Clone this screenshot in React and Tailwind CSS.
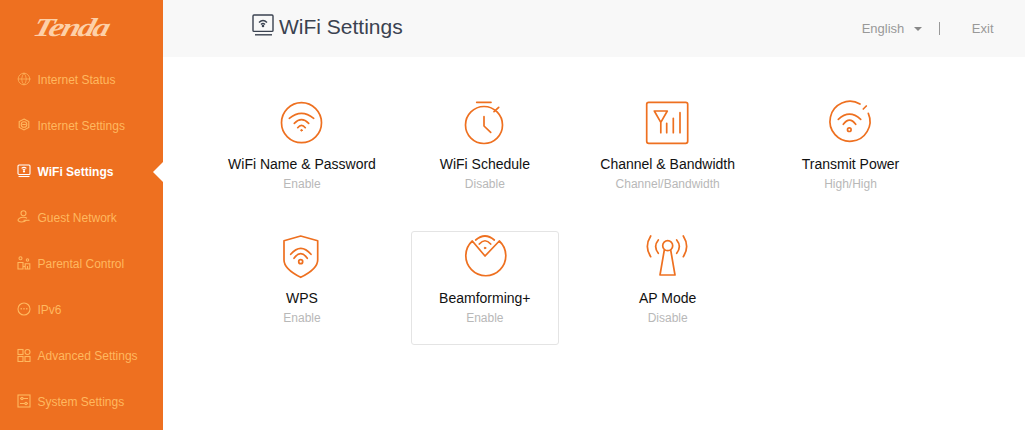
import { Globe } from "lucide-react";

const menuItems = [
    { label: "Internet Status", icon: "globe" },
    { label: "Internet Settings", icon: "internet" },
    { label: "WiFi Settings", icon: "wifi", active: true },
    { label: "Guest Network", icon: "guest" },
    { label: "Parental Control", icon: "parental" },
    { label: "IPv6", icon: "ipv6" },
    { label: "Advanced Settings", icon: "advanced" },
    { label: "System Settings", icon: "system" },
];

const tiles = [
    { name: "WiFi Name & Password", status: "Enable", icon: "wifiCircle" },
    { name: "WiFi Schedule", status: "Disable", icon: "schedule" },
    { name: "Channel & Bandwidth", status: "Channel/Bandwidth", icon: "channel" },
    { name: "Transmit Power", status: "High/High", icon: "power" },
    { name: "WPS", status: "Enable", icon: "wps" },
    { name: "Beamforming+", status: "Enable", icon: "beam", hovered: true },
    { name: "AP Mode", status: "Disable", icon: "ap" },
];

// Small sidebar icons, drawn on a 14px box
function MenuIcon({ name }) {
    const shapes = {
        globe: <Globe size={14} strokeWidth={1.2} />,
        internet: (
            <svg width="14" height="14" viewBox="0 0 14 14" fill="none" stroke="currentColor" strokeWidth="1.1">
                <path d="M7 1 11.800 3.500v6L7 12 2.200 9.500v-6z" />
                <circle cx="7" cy="6.500" r="2.800" />
                <path d="M5.200 6.500h3.600" />
            </svg>
        ),
        wifi: (
            <svg width="14" height="14" viewBox="0 0 14 14" fill="none" stroke="currentColor" strokeWidth="1.100">
                <rect x="1" y="1" width="12" height="9.500" rx="1" />
                <path d="M1.500 12.500h11" />
                <path d="M4.600 4.400c1.400-1.200 3.400-1.200 4.800 0M5.800 5.800c.7-.6 1.700-.6 2.400 0" />
                <circle cx="7" cy="7.400" r=".6" fill="currentColor" />
            </svg>
        ),
        guest: (
            <svg width="14" height="14" viewBox="0 0 14 14" fill="none" stroke="currentColor" strokeWidth="1.100">
                <circle cx="6.500" cy="3.200" r="2.500" />
                <path d="M10 8.200C8 6.800 3.500 6.800 1.500 9c-1.200 1.800.5 3 3 3 2.800 0 4-.8 4.800-1.800" />
                <path d="M6.500 10.300h6" />
            </svg>
        ),
        parental: (
            <svg width="14" height="14" viewBox="0 0 14 14" fill="none" stroke="currentColor" strokeWidth="1.100">
                <circle cx="3.500" cy="2.200" r="1.500" />
                <circle cx="10.500" cy="4" r="1.200" />
                <path d="M1 13V6.500h5V13zM8.200 13V7.800h4.600V13zM6 10.500h2.200M10.500 10v3" />
            </svg>
        ),
        ipv6: (
            <svg width="14" height="14" viewBox="0 0 14 14" fill="none" stroke="currentColor" strokeWidth="1.100">
                <circle cx="7" cy="7" r="6" />
                <path d="M3.600 6.800h1.200M6.400 6.800h1.200M9.200 6.800h1.200" strokeWidth="1.500" />
            </svg>
        ),
        advanced: (
            <svg width="14" height="14" viewBox="0 0 14 14" fill="none" stroke="currentColor" strokeWidth="1.100">
                <rect x="1" y="1.500" width="5" height="5" />
                <circle cx="10.500" cy="4" r="2.500" />
                <rect x="1" y="8.500" width="5" height="5" />
                <rect x="8" y="8.500" width="5" height="5" />
            </svg>
        ),
        system: (
            <svg width="14" height="14" viewBox="0 0 14 14" fill="none" stroke="currentColor" strokeWidth="1.100">
                <rect x="1" y="1" width="12" height="12" />
                <path d="M3 4.500h8M3 9.500h8" />
                <circle cx="5" cy="4.500" r="1.100" fill="#ee7020" />
                <circle cx="9" cy="9.500" r="1.100" fill="#ee7020" />
            </svg>
        ),
    };
    return shapes[name];
}

// Large orange tile icons, 46px box
function TileIcon({ name }) {
    const shapes = {
        wifiCircle: (
            <>
                <circle cx="23" cy="22.700" r="20" />
                <path d="M10.800 18.300Q23 8.500 35.200 18.300M15.800 23.300Q23 16 30.200 23.300M19.200 27.700Q23 23 26.800 27.700" />
                <circle cx="23" cy="30.300" r=".8" fill="#ee7020" strokeWidth="1" />
            </>
        ),
        schedule: (
            <>
                <path d="M15.200 2.300h14.300" />
                <path d="M32.500 11.700 37.200 7.300" />
                <circle cx="22.500" cy="25" r="18.500" />
                <path d="M22.500 16.700V26l6.700 6.300" />
            </>
        ),
        channel: (
            <>
                <rect x="2.200" y="2.300" width="41" height="41" rx="2" />
                <path d="M9.800 11h13l-6.500 11.300zM16.300 22.300v10.400M22.200 23.300v9.400M28.800 18.300v14.400M35.500 12.700v20" />
            </>
        ),
        power: (
            <>
                <path d="M33.500 4A20 20 0 1 0 41.800 13.300" />
                <path d="M36.800 9 39.800 6" />
                <path d="M11.800 19.300Q23 9 34.200 19.300M16.800 24.300Q23 16 29.200 24.300" />
                <circle cx="22.800" cy="29.700" r="1.800" />
            </>
        ),
        wps: (
            <>
                <path d="M22.200 2 39.200 6.700V26C39.200 33 31 39 22.200 43.300 13.500 39 5.500 33 5.500 26V6.700z" />
                <path d="M12.200 20.300Q22.300 8.500 32.500 20.300M15.500 24.300Q22.200 15 28.800 24.300" />
                <circle cx="22.200" cy="27.700" r="2" />
            </>
        ),
        beam: (
            <>
                <path d="M10.800 7 23.500 22 37.800 7A20 20 0 1 1 10.800 7z" />
                <path d="M14.200 6Q23.500-2 32.800 6M17.800 10Q23.500 3.500 29.200 10" />
                <circle cx="23.500" cy="14" r=".8" fill="#ee7020" strokeWidth="1" />
            </>
        ),
        ap: (
            <>
                <circle cx="23.200" cy="11.700" r="5" />
                <path d="M19.800 16 15.500 41h15L26.200 16" />
                <path d="M6.200 2Q-.5 12.500 6.200 22.700M38.800 2Q45.500 12.500 38.800 22.700M13.800 6Q8.500 12.500 13.800 19.300M32.200 6Q37.500 12.500 32.200 19.300" />
            </>
        ),
    };
    return (
        <svg width="46" height="46" viewBox="0.5 0 46 46" fill="none" stroke="#ee7020" strokeWidth="1.700" strokeLinecap="round" strokeLinejoin="round" className="overflow-visible">
            {shapes[name]}
        </svg>
    );
}

function Sidebar() {
    return (
        <aside className="w-[163px] shrink-0 bg-[#ee7020] h-[430px] overflow-hidden">
            <div className="h-[57px] pl-[34px] pt-[13px]">
                <span className="block origin-left -skew-x-12 scale-x-[1.28] text-[26px] leading-[30px] font-bold italic tracking-[-1.500px] text-[#fdd0a8] [font-family:'Liberation_Serif',serif]">
                    Tenda
                </span>
            </div>
            <ul>
                {menuItems.map((item) => (
                    <li
                        key={item.label}
                        className={`relative flex h-[46px] items-center pl-[17px] text-[12px] [font-family:'Liberation_Sans',sans-serif] ${
                            item.active ? "font-bold text-white" : "text-[#ffb85f]"
                        }`}
                    >
                        <span className="mr-[6.500px] flex h-[14px] w-[14px] -translate-y-[1px] items-center justify-center">
                            <MenuIcon name={item.icon} />
                        </span>
                        {item.label}
                        {item.active && (
                            <span className="absolute right-0 top-[13px] h-0 w-0 border-y-[10px] border-r-[10px] border-y-transparent border-r-white" />
                        )}
                    </li>
                ))}
            </ul>
        </aside>
    );
}

function Header() {
    return (
        <header className="flex h-[57px] items-center bg-[#f8f8f8] pl-[89px] pr-[31.500px] [font-family:'Liberation_Sans',sans-serif]">
            <svg className="mr-[5px] -translate-y-[4px]" width="22" height="22" viewBox="0 0 22 22" fill="none" stroke="#3a4250" strokeWidth="1.400">
                <rect x="1" y="1" width="20" height="16.400" rx="1" />
                <path d="M3 20.800h17" />
                <path d="M7 8.500Q11 4.500 15 8.500M9 10.500Q11 8.500 13 10.500" />
                <circle cx="11" cy="12" r=".6" fill="#3a4250" />
            </svg>
            <h1 className="-translate-y-[2px] text-[21px] leading-none text-[#3a4250]">WiFi Settings</h1>
            <div className="ml-auto flex items-center text-[13px] text-[#999999]">
                <span>English</span>
                <span className="ml-[10px] mt-[1px] h-0 w-0 border-x-[4.500px] border-t-[4px] border-x-transparent border-t-[#888888]" />
                <span className="ml-[17px] h-[13px] w-px bg-[#999999]" />
                <span className="ml-[31.500px]">Exit</span>
            </div>
        </header>
    );
}

function Tile({ tile }) {
    return (
        <div
            className={`flex h-[114px] w-[148px] flex-col items-center rounded-[3px] border pt-[2px] ${
                tile.hovered ? "border-[#e4e4e4]" : "border-transparent"
            }`}
        >
            <TileIcon name={tile.icon} />
            <div className="mt-[8px] whitespace-nowrap text-[14px] leading-[20px] text-[#111111]">{tile.name}</div>
            <div className="mt-[1px] text-[12px] leading-[18px] text-[#b8b8b8]">{tile.status}</div>
        </div>
    );
}

export default function App() {
    return (
        <div className="flex h-[430px] w-[1025px] overflow-hidden bg-white">
            <Sidebar />
            <main className="min-w-0 flex-1">
                <Header />
                <div className="grid grid-cols-[repeat(4,148px)] gap-x-[34.830px] gap-y-[20px] pl-[65px] pt-[40px] [font-family:'Liberation_Sans',sans-serif]">
                    {tiles.map((tile) => (
                        <Tile key={tile.name} tile={tile} />
                    ))}
                </div>
            </main>
        </div>
    );
}
